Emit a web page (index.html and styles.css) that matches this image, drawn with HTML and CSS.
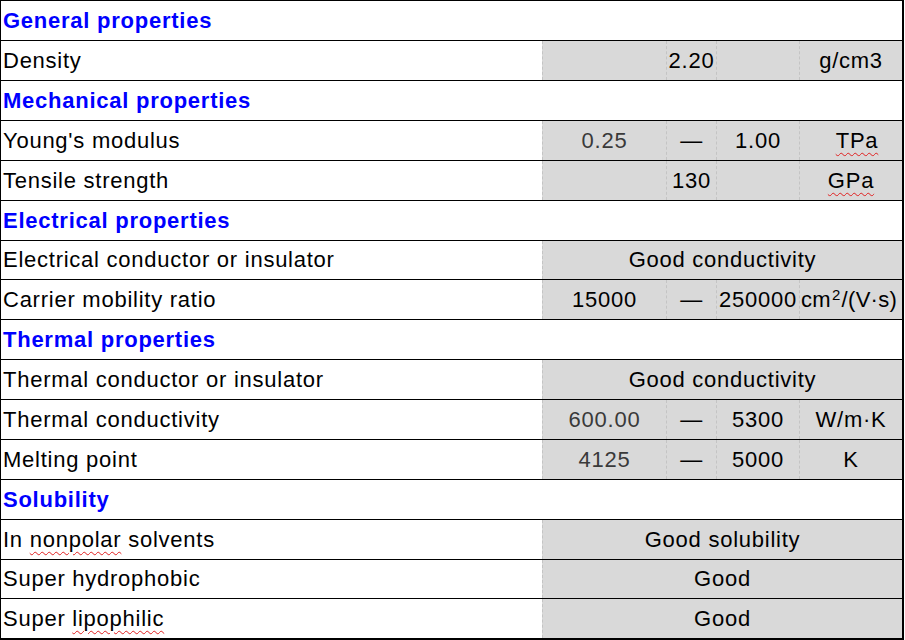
FILE: index.html
```html
<!DOCTYPE html>
<html>
<head>
<meta charset="utf-8">
<link rel="stylesheet" href="styles.css">
</head>
<body>
<div class="sheet">
  <div class="row head"><div class="label">General properties</div></div>
  <div class="row">
    <div class="label">Density</div>
    <div class="v c1"></div><div class="v c2">2.20</div><div class="v c3"></div><div class="v c4">g/cm3</div>
  </div>
  <div class="row head"><div class="label">Mechanical properties</div></div>
  <div class="row">
    <div class="label">Young's modulus</div>
    <div class="v c1 dim">0.25</div><div class="v c2">—</div><div class="v c3">1.00</div><div class="v c4 unit-tpa"><span class="sp">TPa</span></div>
  </div>
  <div class="row">
    <div class="label">Tensile strength</div>
    <div class="v c1"></div><div class="v c2">130</div><div class="v c3"></div><div class="v c4"><span class="sp">GPa</span></div>
  </div>
  <div class="row head"><div class="label">Electrical properties</div></div>
  <div class="row short">
    <div class="label">Electrical conductor or insulator</div>
    <div class="v span">Good conductivity</div>
  </div>
  <div class="row">
    <div class="label">Carrier mobility ratio</div>
    <div class="v c1">15000</div><div class="v c2">—</div><div class="v c3">250000</div><div class="v c4 mob"><span>cm<sup>2</sup>/(V·s)</span></div>
  </div>
  <div class="row head"><div class="label">Thermal properties</div></div>
  <div class="row">
    <div class="label">Thermal conductor or insulator</div>
    <div class="v span">Good conductivity</div>
  </div>
  <div class="row">
    <div class="label">Thermal conductivity</div>
    <div class="v c1 dim">600.00</div><div class="v c2">—</div><div class="v c3">5300</div><div class="v c4">W/m·K</div>
  </div>
  <div class="row">
    <div class="label">Melting point</div>
    <div class="v c1 dim">4125</div><div class="v c2">—</div><div class="v c3">5000</div><div class="v c4">K</div>
  </div>
  <div class="row head"><div class="label">Solubility</div></div>
  <div class="row">
    <div class="label">In <span class="sp">nonpolar</span> solvents</div>
    <div class="v span">Good solubility</div>
  </div>
  <div class="row short">
    <div class="label">Super hydrophobic</div>
    <div class="v span">Good</div>
  </div>
  <div class="row last">
    <div class="label">Super <span class="sp">lipophilic</span></div>
    <div class="v span">Good</div>
  </div>
</div>
</body>
</html>
```

FILE: styles.css
```css
html, body {
  margin: 0;
  padding: 0;
  background: #ffffff;
}
body {
  font-family: "Liberation Sans", Arial, sans-serif;
  font-size: 22px;
  letter-spacing: 0.75px;
  color: #000000;
}
.sheet {
  width: 904px;
  box-sizing: border-box;
  border-left: 1px solid #000;
  border-right: 2px solid #000;
  border-top: 1px solid #000;
}
.row {
  display: grid;
  grid-template-columns: 541px 124px 50px 83px 103px;
  height: 40px;
  box-sizing: border-box;
  border-bottom: 1px solid #000;
}
.row.short { height: 39px; }
.row.last { height: 41px; border-bottom: 2px solid #000; }
.label {
  line-height: 39px;
  padding-left: 2px;
  white-space: nowrap;
}
.row.short .label { line-height: 38px; }
.head .label {
  grid-column: 1 / -1;
  color: #0000ff;
  font-weight: bold;
}
.v {
  display: flex;
  align-items: center;
  justify-content: center;
  background: #d9d9d9;
  border-left: 1px dashed #c4c4c4;
  white-space: nowrap;
}
.v.span { grid-column: 2 / -1; }
.dim { color: #3a3a3a; }
.unit-tpa { padding-left: 12px; }
.mob { justify-content: flex-start; padding-left: 1px; letter-spacing: 0.3px; }
.mob sup {
  font-size: 15px;
  line-height: 0;
  vertical-align: 7px;
  padding: 0 1px;
}
.sp {
  text-decoration: underline wavy #e02020;
  text-decoration-thickness: 1px;
  text-underline-offset: 4px;
}
```
